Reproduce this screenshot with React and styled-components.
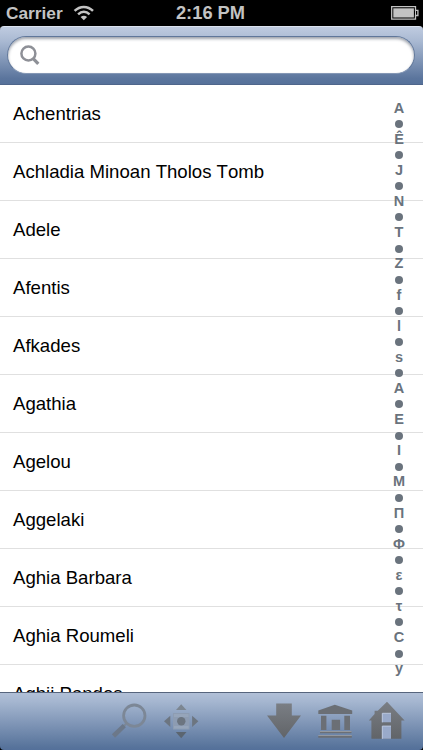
import React, { memo } from 'react';
import styled, { createGlobalStyle } from 'styled-components';

const places = [
	'Achentrias',
	'Achladia Minoan Tholos Tomb',
	'Adele',
	'Afentis',
	'Afkades',
	'Agathia',
	'Agelou',
	'Aggelaki',
	'Aghia Barbara',
	'Aghia Roumeli',
	'Aghii Pandes',
];

const sections = 'AÊJNTZflsΑΕΙΜΠΦετСу'.split('');

const WifiIcon = () => (
	<svg width="22" height="16" viewBox="0 0 22 16" fill="none" stroke="#c3c3c3">
		<path d="M1.6 5.9C7 .6 14.6.6 20 5.9" strokeWidth="2.5" />
		<path d="M5.1 9.3c3.5-3.3 8-3.3 11.5 0" strokeWidth="2.5" />
		<path d="M10.8 15.3 7.6 12c2-1.7 4.5-1.7 6.5 0z" fill="#c3c3c3" stroke="none" />
	</svg>
);

const BatteryIcon = () => (
	<svg width="28" height="14" viewBox="0 0 28 14">
		<path d="M.7.7h23.8v3.6h2.4v5.2h-2.4v3.6H.7z" fill="none" stroke="#c3c3c3" strokeWidth="1.3" />
		<path d="M24.5 4.3v5.2" stroke="#c3c3c3" />
		<path d="M2.3 2.3h20.6v9.2H2.3z" fill="#c3c3c3" />
	</svg>
);

const SearchIcon = () => (
	<svg width="20" height="21" viewBox="0 0 20 21" fill="none" stroke="#8e9097">
		<circle cx="8.4" cy="8.5" r="7" strokeWidth="2.5" />
		<path d="m13 13.4 5.3 5.5" strokeWidth="3.2" />
	</svg>
);

const MagnifierIcon = () => (
	<svg width="36" height="36" viewBox="0 0 36 36" fill="none" stroke="#7c8796">
		<circle cx="23.3" cy="12.7" r="10.7" strokeWidth="2.8" />
		<path d="m15.5 20.5-2.3 2.3" strokeWidth="2" />
		<path d="M13.3 22.7 2.5 33" strokeWidth="4.6" stroke="#6c7889" />
	</svg>
);

const LocateIcon = () => (
	<svg width="36" height="36" viewBox="0 0 36 36" fill="#6c7580">
		<path fill="#8d9cb2" d="M10 10h16.5v16.5H10z" />
		<path fill="#96a5ba" d="M11 11h14.5v3H11zM11 23h14.5v2.5H11z" />
		<circle cx="18.3" cy="18.2" r="4.2" />
		<path d="M18.2 1.2 23.4 7H13z" fill="#7c8691" />
		<path d="M18.2 35.2 12.8 29h10.7z" fill="#5b6570" />
		<path d="M1 18.3 7.3 12.7v11.2z" />
		<path d="m35.4 18.3-6.3-5.6v11.2z" />
	</svg>
);

const IconFade = ({ id }) => (
	<linearGradient id={id} x1="0" y1="0" x2="0" y2="1">
		<stop offset="0" stopColor="#7a7e84" />
		<stop offset="1" stopColor="#616468" />
	</linearGradient>
);

const DownIcon = () => (
	<svg width="36" height="36" viewBox="0 0 36 36">
		<defs>
			<IconFade id="downFade" />
		</defs>
		<path fill="url(#downFade)" d="M10.2.6h15.6v12H35L18 35 1 12.6h9.2z" />
	</svg>
);

const MuseumIcon = () => (
	<svg width="36" height="36" viewBox="0 0 36 36" fill="#6b6f75">
		<path d="M1.3 7.5 17.8 1.8l17.4 5.7V11H1.3z" />
		<path d="M4 12.8h5.4v14.3H4zM27.3 12.8H33v14.3h-5.7zM14.7 16.8h8.4v10.3h-8.4z" />
		<path d="M3 28.6h31.5v1.7H3zM1.3 32.7h33.5v2H1.3z" />
		<path fill="#a1a1a2" d="M3 28h31.5v.8H3zM1.3 32h33.5v.8H1.3z" />
	</svg>
);

const HomeIcon = () => (
	<svg width="38" height="39" viewBox="0 0 38 39">
		<defs>
			<IconFade id="homeFade" />
		</defs>
		<path
			fill="url(#homeFade)"
			d="M19 .8 36.6 19.4h-3.2v18.4H3.4V19.4H.8L6.6 13V9.8h3.2z"
		/>
		<path fill="#99aaca" d="M14 12.3h9v9h-9zM14 25.1h9v12.7h-9z" />
		<path
			d="M14.3 37.8V25.1H23M14.3 21.3v-9H23"
			fill="none"
			stroke="#b9c7de"
			strokeWidth="1"
		/>
	</svg>
);

const App = memo(() => (
	<>
		<GlobalStyle />
		<Screen>
			<StatusBar>
				<Network>
					Carrier
					<WifiIcon />
				</Network>
				<Clock>2:16 PM</Clock>
				<Battery>
					<BatteryIcon />
				</Battery>
			</StatusBar>
			<SearchBar>
				<SearchField>
					<SearchIcon />
				</SearchField>
			</SearchBar>
			<ListArea>
				<List>
					{places.map(place => (
						<Row key={place}>{place}</Row>
					))}
				</List>
				<SectionIndex>
					{sections.map((letter, i) => (
						<React.Fragment key={letter}>
							{i > 0 && (
								<IndexItem>
									<Dot />
								</IndexItem>
							)}
							<IndexItem>{letter}</IndexItem>
						</React.Fragment>
					))}
				</SectionIndex>
			</ListArea>
			<Toolbar>
				<ToolGroup $gap={16}>
					<MagnifierIcon />
					<LocateIcon />
				</ToolGroup>
				<ToolGroup $gap={15}>
					<DownIcon />
					<MuseumIcon />
					<HomeIcon />
				</ToolGroup>
			</Toolbar>
		</Screen>
	</>
));

const Screen = styled.div`
	display: flex;
	flex-direction: column;
	width: 423px;
	height: 750px;
	overflow: hidden;
	background: #000;
`;

const StatusBar = styled.div`
	display: grid;
	grid-template-columns: 1fr auto 1fr;
	align-items: center;
	flex: none;
	height: 26px;
	padding: 0 4px 0 6px;
	color: #c3c3c3;
	font-size: 18.3px;
	font-weight: bold;
	line-height: 26px;
`;

const Network = styled.div`
	display: flex;
	align-items: center;
	gap: 10px;
	font-size: 17.3px;
`;

const Clock = styled.div`
	padding-right: 4px;
	white-space: nowrap;
`;

const Battery = styled.div`
	display: flex;
	justify-content: flex-end;
`;

const SearchBar = styled.div`
	flex: none;
	height: 58.8px;
	padding: 9px 8px 0 7px;
	border-top: 1px solid #dbe3ef;
	border-bottom: 1.4px solid #4f668b;
	border-radius: 4px 4px 0 0;
	background: linear-gradient(180deg, #bfcbe0 0%, #a9b9d2 25%, #5b759d 90%, #56719a 100%);
`;

const SearchField = styled.div`
	display: flex;
	align-items: center;
	height: 38px;
	padding: 0.5px 0 0 11.5px;
	border: 1px solid #60779a;
	border-bottom-color: #8497b5;
	border-radius: 19px;
	background: #fff;
	box-shadow: inset 0 2px 3px rgba(40, 50, 70, 0.45);
`;

const ListArea = styled.div`
	position: relative;
	flex: 1;
	min-height: 0;
	overflow: hidden;
	background: #fff;
`;

const List = styled.ul`
	margin: 0;
	padding: 0;
	list-style: none;
`;

const Row = styled.li`
	height: 58.04px;
	padding-left: 13px;
	border-bottom: 1px solid #e0e0e0;
	color: #000;
	font-size: 18.6px;
	font-kerning: none;
	line-height: 58.8px;
	white-space: nowrap;
`;

const SectionIndex = styled.div`
	position: absolute;
	top: 15.8px;
	right: 14px;
	width: 20px;
	color: #6a737d;
	font-size: 14.5px;
	font-weight: bold;
`;

const IndexItem = styled.div`
	display: flex;
	align-items: center;
	justify-content: center;
	height: 15.58px;
	line-height: 15.6px;
`;

const Dot = styled.span`
	width: 8px;
	height: 8px;
	border-radius: 50%;
	background: #6a737d;
`;

const Toolbar = styled.div`
	display: flex;
	align-items: flex-start;
	justify-content: space-between;
	flex: none;
	height: 58.2px;
	padding: 10px 17px 0 111px;
	border-top: 1.5px solid #56657d;
	border-radius: 0 0 4px 4px;
	background: linear-gradient(180deg, #b1c0d7 0%, #a5b6d0 15%, #57739b 95%, #54709a 100%);
`;

const ToolGroup = styled.div`
	display: flex;
	align-items: center;
	height: 36px;
	gap: ${props => props.$gap}px;
`;

const GlobalStyle = createGlobalStyle`
	* {
		box-sizing: border-box;
	}
	body {
		margin: 0;
		background: #000;
		font-family: 'Liberation Sans', Arial, sans-serif;
	}
	svg {
		display: block;
		flex: none;
	}
`;

export default App;
